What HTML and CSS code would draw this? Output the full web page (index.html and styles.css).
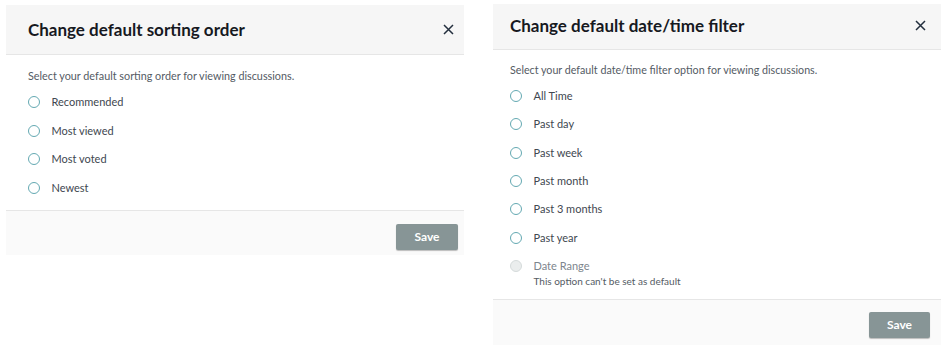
FILE: index.html
```html
<!DOCTYPE html>
<html lang="en">

<head>
  <meta charset="UTF-8">
  <meta name="viewport" content="width=device-width, initial-scale=1.0">
  <title>Default preferences</title>
  <link rel="stylesheet" href="styles.css">
</head>

<body>
  <div class="page">

    <div class="modal modal-sort">
      <div class="modal-header">
        <h2>Change default sorting order</h2>
        <button class="close" aria-label="Close">
          <svg width="11" height="11" viewBox="0 0 11 11"><path d="M1 1L10 10M10 1L1 10" /></svg>
        </button>
      </div>
      <div class="modal-body">
        <p class="desc">Select your default sorting order for viewing discussions.</p>
        <div class="options">
          <label class="option"><span class="radio"></span>Recommended</label>
          <label class="option"><span class="radio"></span>Most viewed</label>
          <label class="option"><span class="radio"></span>Most voted</label>
          <label class="option"><span class="radio"></span>Newest</label>
        </div>
      </div>
      <div class="modal-footer">
        <button class="save">Save</button>
      </div>
    </div>

    <div class="modal modal-date">
      <div class="modal-header">
        <h2>Change default date/time filter</h2>
        <button class="close" aria-label="Close">
          <svg width="11" height="11" viewBox="0 0 11 11"><path d="M1 1L10 10M10 1L1 10" /></svg>
        </button>
      </div>
      <div class="modal-body">
        <p class="desc">Select your default date/time filter option for viewing discussions.</p>
        <div class="options">
          <label class="option"><span class="radio"></span>All Time</label>
          <label class="option"><span class="radio"></span>Past day</label>
          <label class="option"><span class="radio"></span>Past week</label>
          <label class="option"><span class="radio"></span>Past month</label>
          <label class="option"><span class="radio"></span>Past 3 months</label>
          <label class="option"><span class="radio"></span>Past year</label>
          <label class="option disabled">
            <span class="radio"></span>
            <span>
              <span class="label">Date Range</span>
              <span class="hint">This option can't be set as default</span>
            </span>
          </label>
        </div>
      </div>
      <div class="modal-footer">
        <button class="save">Save</button>
      </div>
    </div>

  </div>
</body>

</html>
```

FILE: styles.css
```css
body {
  margin: 0;
  background: #fff;
  font-family: Lato, "Liberation Sans", Arial, sans-serif;
  color: #545b64;
}

.page {
  display: flex;
  align-items: flex-start;
}

.modal {
  background: #fff;
}

.modal-sort {
  width: 458px;
  margin: 5px 0 0 6px;
}

.modal-date {
  width: 448px;
  margin: 4px 0 0 29px;
}

.modal-header {
  display: flex;
  align-items: center;
  justify-content: space-between;
  background: #f6f6f6;
  border-bottom: 1px solid #e6e6e6;
  padding: 0 10px 0 22px;
  height: 49px;
}

.modal-date .modal-header {
  padding: 0 15px 2px 17px;
  box-sizing: border-box;
  height: 46px;
}

.modal-header h2 {
  margin: 0;
  font-size: 17px;
  font-weight: 700;
  color: #16191f;
}

.close {
  border: none;
  background: none;
  padding: 0;
  width: 11px;
  height: 11px;
  display: flex;
}

.close path {
  stroke: #232f3e;
  stroke-width: 1.5;
  fill: none;
}

.modal-body {
  padding: 13px 22px 7.6px;
}

.modal-date .modal-body {
  padding: 12px 17px 10.6px;
}

.desc {
  margin: 0 0 3.7px;
  font-size: 10.8px;
  line-height: 16px;
}

.modal-date .desc {
  font-size: 10.7px;
}

.option {
  display: flex;
  align-items: center;
  gap: 11.5px;
  height: 28.67px;
  font-size: 11px;
  line-height: 16px;
  color: #414750;
}

.modal-date .option {
  height: 28.4px;
}

.radio {
  width: 10px;
  height: 10px;
  border: 1.5px solid #64a9b2;
  border-radius: 50%;
  flex: none;
}

.modal-date .option.disabled {
  height: auto;
  align-items: flex-start;
  padding-top: 6.2px;
  color: #7d858d;
}

.option.disabled .radio {
  margin-top: 1.5px;
  background: #eaeded;
  border-color: #d5dbdb;
}

.label,
.hint {
  display: block;
}

.hint {
  font-size: 10px;
  line-height: 14px;
  color: #545b64;
}

.modal-footer {
  display: flex;
  justify-content: flex-end;
  align-items: flex-start;
  background: #fafafa;
  border-top: 1px solid #e6e6e6;
  padding: 13px 6px 0 0;
  box-sizing: border-box;
  height: 45px;
}

.modal-date .modal-footer {
  height: 46px;
  padding: 12px 11px 0 0;
}

.save {
  width: 62px;
  height: 26px;
  border: none;
  border-radius: 2px;
  background: #879596;
  color: #fff;
  font-family: Lato, "Liberation Sans", Arial, sans-serif;
  font-size: 12px;
  font-weight: 700;
  box-shadow: 0 1px 1px rgba(0, 0, 0, 0.25);
}

.modal-date .save {
  width: 61px;
}
```
